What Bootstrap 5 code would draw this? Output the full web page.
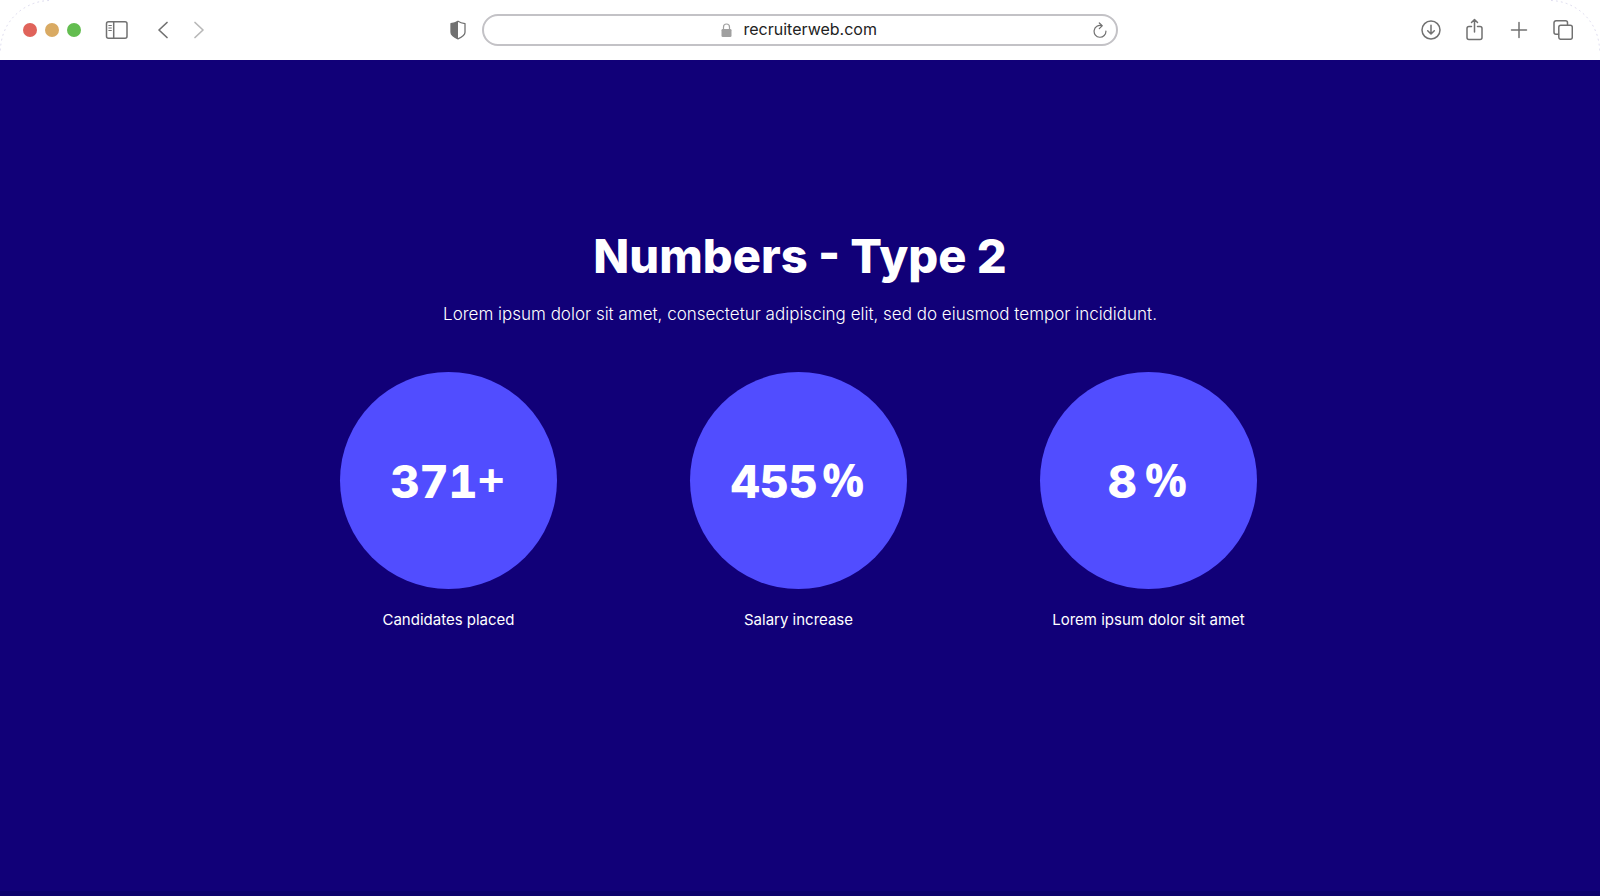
<!DOCTYPE html>
<html lang="en">
<head>
<meta charset="utf-8">
<meta name="viewport" content="width=device-width, initial-scale=1">
<title>Numbers - Type 2</title>
<link href="https://cdn.jsdelivr.net/npm/bootstrap@5.3.0/dist/css/bootstrap.min.css" rel="stylesheet">
<style>
  body { font-family: Inter, "Liberation Sans", sans-serif; background: #110078; }
  .toolbar { height: 60px; padding: 0 27px 0 23px; color: #717171; }
  .toolbar svg { display: block; fill: none; stroke: currentColor; stroke-width: 1.5; stroke-linecap: round; stroke-linejoin: round; }
  .tool { border: 0; padding: 0; background: none; color: inherit; }
  .light { width: 14px; height: 14px; border: 0; padding: 0; border-radius: 50%; }
  .light-red { background: #e0635a; }
  .light-amber { background: #d9aa63; }
  .light-green { background: #63bd50; }
  .side { flex: 1 1 0; }
  .lights { gap: 8px; }
  .shield { margin-right: 12px; }
  .address { width: 41%; height: 32px; padding: 0 9px; border: 2px solid #c3c2c6; border-radius: 16px; gap: 12px; }
  .address input { width: 136px; border: 0; padding: 0 0 2px; font-size: 16px; line-height: 24px; color: #222; background: none; outline: 0; font-family: Inter, sans-serif; }
  .corner { top: 0; pointer-events: none; color: #dcdaee; }
  .stage { padding: 168px 0 160px; border-bottom: 5px solid #0d006c; }
  .title { font-size: 47px; line-height: 56px; font-weight: 800; margin-bottom: 16px; }
  .intro { font-size: 17px; line-height: 28px; font-weight: 300; margin-bottom: 44px; }
  .stats { max-width: 1053px; margin: 0 auto; padding-right: 3px; }
  .disc { width: 217px; height: 217px; padding: 2px 2px 0 0; background: #514dff; font-size: 45px; line-height: 56px; font-weight: 800; font-variant-numeric: tabular-nums; }
  .unit { font-family: "Open Sans", sans-serif; font-size: 47px; font-weight: 700; padding-bottom: 6px; }
  .caption-line { font-size: 15px; line-height: 24px; margin-top: 19px; }
</style>
</head>
<body class="min-vh-100 d-flex flex-column">
<header class="toolbar bg-white d-flex align-items-center position-relative">
  <svg class="corner position-absolute start-0" width="52" height="52" viewBox="0 0 52 52" aria-hidden="true"><path d="M.5 50A50 50 0 0 1 50 .5" stroke-width="1" stroke-dasharray="1 4"/></svg>
  <svg class="corner position-absolute end-0" width="52" height="52" viewBox="0 0 52 52" aria-hidden="true"><path d="M51.500 50A50 50 0 0 0 2 .5" stroke-width="1" stroke-dasharray="1 4"/></svg>
  <div class="side d-flex align-items-center">
    <div class="lights d-flex me-4">
      <button class="light light-red" aria-label="Close"></button>
      <button class="light light-amber" aria-label="Minimise"></button>
      <button class="light light-green" aria-label="Zoom"></button>
    </div>
    <button class="tool me-4" aria-label="Sidebar"><svg width="24" height="20" viewBox="0 0 24 20"><rect x="1.500" y="1.800" width="20.500" height="16.500" rx="2"/><path d="M8.700 2v16"/><path d="M3.800 5.500h2.600M3.800 8h2.600M3.800 10.500h2.600" stroke-width="1"/></svg></button>
    <button class="tool ms-1 me-4" aria-label="Back"><svg width="12" height="20" viewBox="0 0 12 20"><path d="M10 2.500 2 10l8 7.500" stroke-width="1.700"/></svg></button>
    <button class="tool" aria-label="Forward"><svg width="12" height="20" viewBox="0 0 12 20" stroke-opacity=".5"><path d="m2 2.500 8 7.500-8 7.500" stroke-width="1.700"/></svg></button>
    <button class="tool shield ms-auto" aria-label="Privacy report"><svg width="16" height="20" viewBox="0 0 16 20"><path d="M8 1.200c2 1.300 4.300 2 7 2.400v8.600c0 2.600-3.500 5.100-7 6.600-3.500-1.500-7-4-7-6.600V3.600C3.700 3.200 6 2.500 8 1.200z" stroke-width="1.300"/><path d="M8 1.200v17.600c-3.500-1.500-7-4-7-6.600V3.600C3.700 3.200 6 2.500 8 1.200z" fill="currentColor" stroke="none"/></svg></button>
  </div>
  <div class="address d-flex align-items-center ms-1">
    <span class="side"></span>
    <label for="url" aria-label="Address"><svg width="11" height="14" viewBox="0 0 11 14" color="#a0a0a0"><rect x=".5" y="6" width="10" height="8" rx="1.300" fill="currentColor" stroke="none"/><path d="M2.500 6.500V4a3 3 0 0 1 6 0v2.500" stroke-width="1.200"/></svg></label>
    <input id="url" type="text" value="recruiterweb.com">
    <span class="side d-flex justify-content-end"><button class="tool" aria-label="Reload"><svg width="14" height="16" viewBox="0 0 14 16"><path d="M8.700 3.700A5.900 5.900 0 1 0 12.900 9" stroke-width="1.200"/><path d="M6.300 1 9.200 3.800 6.300 6.600" stroke-width="1.200"/></svg></button></span>
  </div>
  <div class="side d-flex align-items-center justify-content-end gap-4">
    <button class="tool" aria-label="Downloads"><svg width="20" height="20" viewBox="0 0 20 20"><circle cx="10" cy="10" r="9"/><path d="M10 5.300v8.500M6.700 10.700l3.300 3.300 3.300-3.300"/></svg></button>
    <button class="tool" aria-label="Share"><svg width="20" height="24" viewBox="0 0 20 24"><path d="M6.500 8.500H4A2 2 0 0 0 2 10.500v9a2 2 0 0 0 2 2h11a2 2 0 0 0 2-2v-9a2 2 0 0 0-2-2h-2.500M9.500 14V1.500M6.500 4.500l3-3 3 3"/></svg></button>
    <button class="tool" aria-label="New tab"><svg width="20" height="20" viewBox="0 0 20 20"><path d="M10 2.500v15M2.500 10h15"/></svg></button>
    <button class="tool" aria-label="Tabs"><svg width="20" height="20" viewBox="0 0 20 20"><rect x="5.800" y="5.300" width="13.500" height="14" rx="2"/><path d="M5.500 14.300H3a2 2 0 0 1-2-2V2.800a2 2 0 0 1 2-2h9.500a2 2 0 0 1 2 2V5"/></svg></button>
  </div>
</header>
<main class="stage flex-fill text-center text-white">
  <h1 class="title">Numbers - Type 2</h1>
  <p class="intro">Lorem ipsum dolor sit amet, consectetur adipiscing elit, sed do eiusmod tempor incididunt.</p>
  <div class="stats row g-0">
    <div class="col-4 d-flex flex-column align-items-center">
      <div class="disc rounded-circle d-flex align-items-center justify-content-center"><span>371</span><span class="unit">+</span></div>
      <p class="caption-line mb-0">Candidates placed</p>
    </div>
    <div class="col-4 d-flex flex-column align-items-center">
      <div class="disc rounded-circle d-flex align-items-center justify-content-center gap-1"><span>455</span><span class="unit">%</span></div>
      <p class="caption-line mb-0">Salary increase</p>
    </div>
    <div class="col-4 d-flex flex-column align-items-center">
      <div class="disc rounded-circle d-flex align-items-center justify-content-center gap-2"><span>8</span><span class="unit">%</span></div>
      <p class="caption-line mb-0">Lorem ipsum dolor sit amet</p>
    </div>
  </div>
</main>
<script src="https://cdn.jsdelivr.net/npm/bootstrap@5.3.0/dist/js/bootstrap.bundle.min.js"></script>
</body>
</html>
